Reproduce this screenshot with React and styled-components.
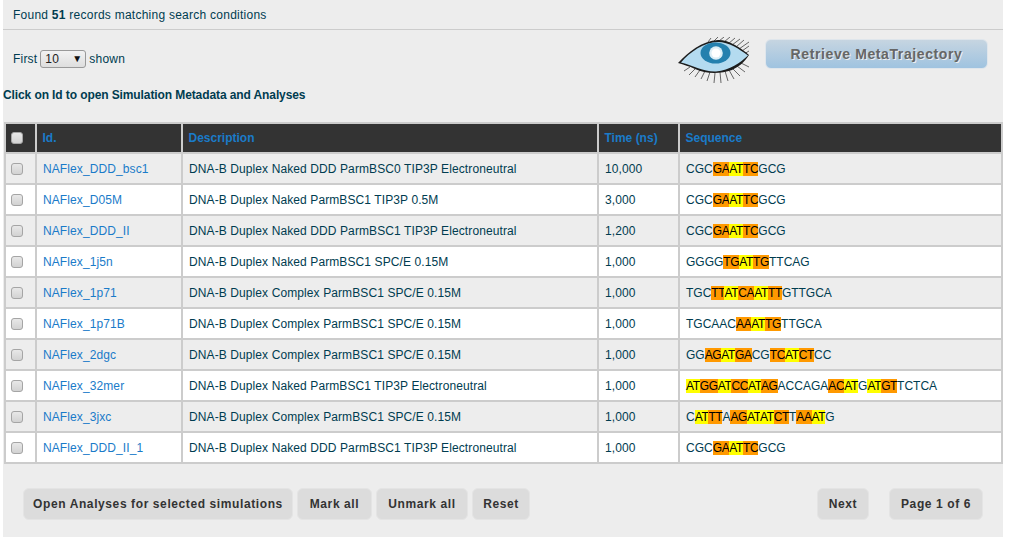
import React from "react";
import styled, { createGlobalStyle } from "styled-components";

const ROWS = [
  ["NAFlex_DDD_bsc1", "DNA-B Duplex Naked DDD ParmBSC0 TIP3P Electroneutral", "10,000", "CGC[GA]{AT}[TC]GCG"],
  ["NAFlex_D05M", "DNA-B Duplex Naked ParmBSC1 TIP3P 0.5M", "3,000", "CGC[GA]{AT}[TC]GCG"],
  ["NAFlex_DDD_II", "DNA-B Duplex Naked DDD ParmBSC1 TIP3P Electroneutral", "1,200", "CGC[GA]{AT}[TC]GCG"],
  ["NAFlex_1j5n", "DNA-B Duplex Naked ParmBSC1 SPC/E 0.15M", "1,000", "GGGG[TG]{AT}[TG]TTCAG"],
  ["NAFlex_1p71", "DNA-B Duplex Complex ParmBSC1 SPC/E 0.15M", "1,000", "TGC[TT]{AT}[CA]{AT}[TT]GTTGCA"],
  ["NAFlex_1p71B", "DNA-B Duplex Complex ParmBSC1 SPC/E 0.15M", "1,000", "TGCAAC[AA]{AT}[TG]TTGCA"],
  ["NAFlex_2dgc", "DNA-B Duplex Complex ParmBSC1 SPC/E 0.15M", "1,000", "GG[AG]{AT}[GA]CG[TC]{AT}[CT]CC"],
  ["NAFlex_32mer", "DNA-B Duplex Naked ParmBSC1 TIP3P Electroneutral", "1,000", "{AT}[GG]{AT}[CC]{AT}[AG]ACCAGA[AC]{AT}G{AT}[GT]TCTCA"],
  ["NAFlex_3jxc", "DNA-B Duplex Complex ParmBSC1 SPC/E 0.15M", "1,000", "C{AT}[TT]A[AG]{AT}{AT}[CT]T[AA]{AT}G"],
  ["NAFlex_DDD_II_1", "DNA-B Duplex Naked DDD ParmBSC1 TIP3P Electroneutral", "1,000", "CGC[GA]{AT}[TC]GCG"],
];

const GlobalStyle = createGlobalStyle`
  html, body {
    margin: 0;
    padding: 0;
    background: #fff;
    overflow: hidden;
  }
  body {
    font-family: "Liberation Sans", Arial, sans-serif;
    font-size: 12px;
    color: #003c50;
  }
`;

const Page = styled.div`
  width: 1000px;
  height: 537px;
  margin-left: 3px;
  background: #ededed;
  letter-spacing: 0.1px;
`;

const Found = styled.div`
  height: 29px;
  line-height: 31px;
  padding-left: 10px;
  border-bottom: 1px solid #ccc;
  letter-spacing: 0.25px;
`;

const Controls = styled.div`
  display: flex;
  align-items: flex-start;
  justify-content: space-between;
  height: 45px;
  padding: 7px 15px 0 10px;
`;

const Shown = styled.div`
  display: flex;
  align-items: center;
  gap: 3px;
  margin-top: 13px;
  letter-spacing: 0.2px;
`;

const SelectBox = styled.div`
  position: relative;
  width: 46px;
  height: 18px;
  &::after {
    content: "▼";
    position: absolute;
    top: 3px;
    right: 4px;
    font-size: 10px;
    line-height: 12px;
    color: #111;
    pointer-events: none;
  }
`;

const PageSize = styled.select`
  appearance: none;
  display: block;
  width: 46px;
  height: 18px;
  padding: 0 0 0 4px;
  border: 1px solid #999;
  border-radius: 3px;
  background: linear-gradient(#f2f2f2, #dedede);
  font-family: "Liberation Sans", Arial, sans-serif;
  font-size: 12px;
  letter-spacing: 0.3px;
  color: #222;
`;

const Retrieve = styled.div`
  display: flex;
  align-items: flex-start;
  gap: 16px;
`;

const RetrieveButton = styled.button`
  width: 223px;
  height: 30px;
  margin-top: 2px;
  border: 1px solid #dfe6ec;
  border-radius: 6px;
  background: linear-gradient(#c6d5e1, #9fc3e0);
  color: #666;
  font-family: "Liberation Sans", Arial, sans-serif;
  font-size: 14px;
  font-weight: bold;
  letter-spacing: 0.6px;
  text-shadow: 1px 1px 0 #eee;
`;

const Hint = styled.div`
  height: 40px;
  line-height: 26px;
  font-weight: bold;
  letter-spacing: -0.1px;
`;

const Table = styled.table`
  width: 999px;
  margin-left: 1px;
  border-collapse: collapse;
  table-layout: fixed;
  border: 2px solid #ccc;
`;

const HeadCell = styled.th`
  height: 28px;
  padding: 0 5.5px;
  border: 2px solid #ccc;
  background: #333;
  color: #1a7bc9;
  text-align: left;
  font-size: 12px;
  letter-spacing: 0;
`;

const Row = styled.tr`
  background: ${({ $odd }) => ($odd ? "#ededed" : "#fff")};
`;

const Cell = styled.td`
  height: 29px;
  padding: 0 6px;
  border: 2px solid #ccc;
  white-space: nowrap;
  overflow: hidden;
`;

const CheckCell = styled(Cell)`
  padding: 0 0 0 5px;
`;

const CheckHead = styled(HeadCell)`
  padding: 0 0 0 5px;
`;

const SequenceCell = styled(Cell)`
  letter-spacing: 0;
`;

const Check = styled.input.attrs({ type: "checkbox" })`
  appearance: none;
  display: block;
  width: 12px;
  height: 12px;
  margin: 0;
  border: 1px solid #a5a5a5;
  border-radius: 3px;
  background: linear-gradient(#e8e8e8, #d2d2d2);
`;

const IdLink = styled.a`
  color: #1a7bc9;
  text-decoration: none;
`;

const Base = styled.span`
  color: #000;
  letter-spacing: -0.35px;
  background: ${({ $tone }) => ($tone === "o" ? "#ff9900" : "#ffff00")};
`;

const Footer = styled.div`
  display: flex;
  justify-content: space-between;
  padding: 24px 20px 0;
`;

const ButtonGroup = styled.div`
  display: flex;
  gap: ${({ $gap }) => $gap}px;
`;

const GreyButton = styled.button`
  height: 32px;
  width: ${({ $w }) => $w}px;
  padding: 0;
  border: 1px solid #e4e4e4;
  border-radius: 6px;
  background: #dcdcdc;
  color: #333;
  font-family: "Liberation Sans", Arial, sans-serif;
  font-size: 12px;
  font-weight: bold;
  letter-spacing: 0.6px;
`;

// splits "CGC[GA]{AT}" into plain, orange and yellow runs
const Sequence = ({ value }) => {
  const parts = value.split(/(\[[A-Z]+\]|\{[A-Z]+\})/).filter(Boolean);
  return parts.map((part, i) => {
    if (part[0] === "[") return <Base key={i} $tone="o">{part.slice(1, -1)}</Base>;
    if (part[0] === "{") return <Base key={i} $tone="y">{part.slice(1, -1)}</Base>;
    return <span key={i}>{part}</span>;
  });
};

const Eye = () => (
  <svg width="71" height="46" viewBox="0 0 71 46">
    <g stroke="#444" strokeWidth="0.8" fill="none">
      <path d="M30 5L33 1M36 4L40 0M41 4L46 0M46 5L52 0M50 7L57 1M54 8L62 2M58 10L66 3M61 12L71 5M64 14L71 9M66 17L71 14" />
      <path d="M12 30L6 34M17 32L11 38M22 33L17 40M27 34L23 42M32 35L29 44M37 36L36 46M42 35L43 46M47 34L50 44M51 33L56 42M55 32L62 39M59 29L67 35M63 26L71 30" />
    </g>
    <path d="M0 26C10 15 24 4 40 3C52 3 63 11 71 18C66 26 60 30 54 33C42 37 28 37 17 32C11 29 6 28 0 26Z" fill="#1c1c1c" />
    <path d="M3 25.5C12 15 26 5 40 5C51 5 61 12 70 18.5C62 26 52 33 38 34.5C26 35 16 29 3 25.5Z" fill="#b4dbf0" />
    <ellipse cx="37.5" cy="16" rx="15" ry="10.5" fill="#2480ae" />
    <circle cx="38" cy="16" r="6.8" fill="#dceef6" />
    <circle cx="38" cy="16" r="4.5" fill="#fff" />
  </svg>
);

export default function App() {
  return (
    <Page>
      <GlobalStyle />
      <Found>
        Found <b>51</b> records matching search conditions
      </Found>
      <Controls>
        <Shown>
          First
          <SelectBox>
            <PageSize defaultValue="10">
              <option>10</option>
              <option>25</option>
              <option>50</option>
            </PageSize>
          </SelectBox>
          shown
        </Shown>
        <Retrieve>
          <Eye />
          <RetrieveButton>Retrieve MetaTrajectory</RetrieveButton>
        </Retrieve>
      </Controls>
      <Hint>Click on Id to open Simulation Metadata and Analyses</Hint>
      <Table>
        <colgroup>
          <col width="31" />
          <col width="146" />
          <col width="416" />
          <col width="81" />
          <col />
        </colgroup>
        <thead>
          <tr>
            <CheckHead>
              <Check />
            </CheckHead>
            <HeadCell>Id.</HeadCell>
            <HeadCell>Description</HeadCell>
            <HeadCell>Time (ns)</HeadCell>
            <HeadCell>Sequence</HeadCell>
          </tr>
        </thead>
        <tbody>
          {ROWS.map(([id, description, time, sequence], i) => (
            <Row key={id} $odd={i % 2 === 0}>
              <CheckCell>
                <Check />
              </CheckCell>
              <Cell>
                <IdLink href="#">{id}</IdLink>
              </Cell>
              <Cell>{description}</Cell>
              <Cell>{time}</Cell>
              <SequenceCell>
                <Sequence value={sequence} />
              </SequenceCell>
            </Row>
          ))}
        </tbody>
      </Table>
      <Footer>
        <ButtonGroup $gap={4}>
          <GreyButton $w={270}>Open Analyses for selected simulations</GreyButton>
          <GreyButton $w={75}>Mark all</GreyButton>
          <GreyButton $w={92}>Unmark all</GreyButton>
          <GreyButton $w={58}>Reset</GreyButton>
        </ButtonGroup>
        <ButtonGroup $gap={20}>
          <GreyButton $w={52}>Next</GreyButton>
          <GreyButton $w={94}>Page 1 of 6</GreyButton>
        </ButtonGroup>
      </Footer>
    </Page>
  );
}
